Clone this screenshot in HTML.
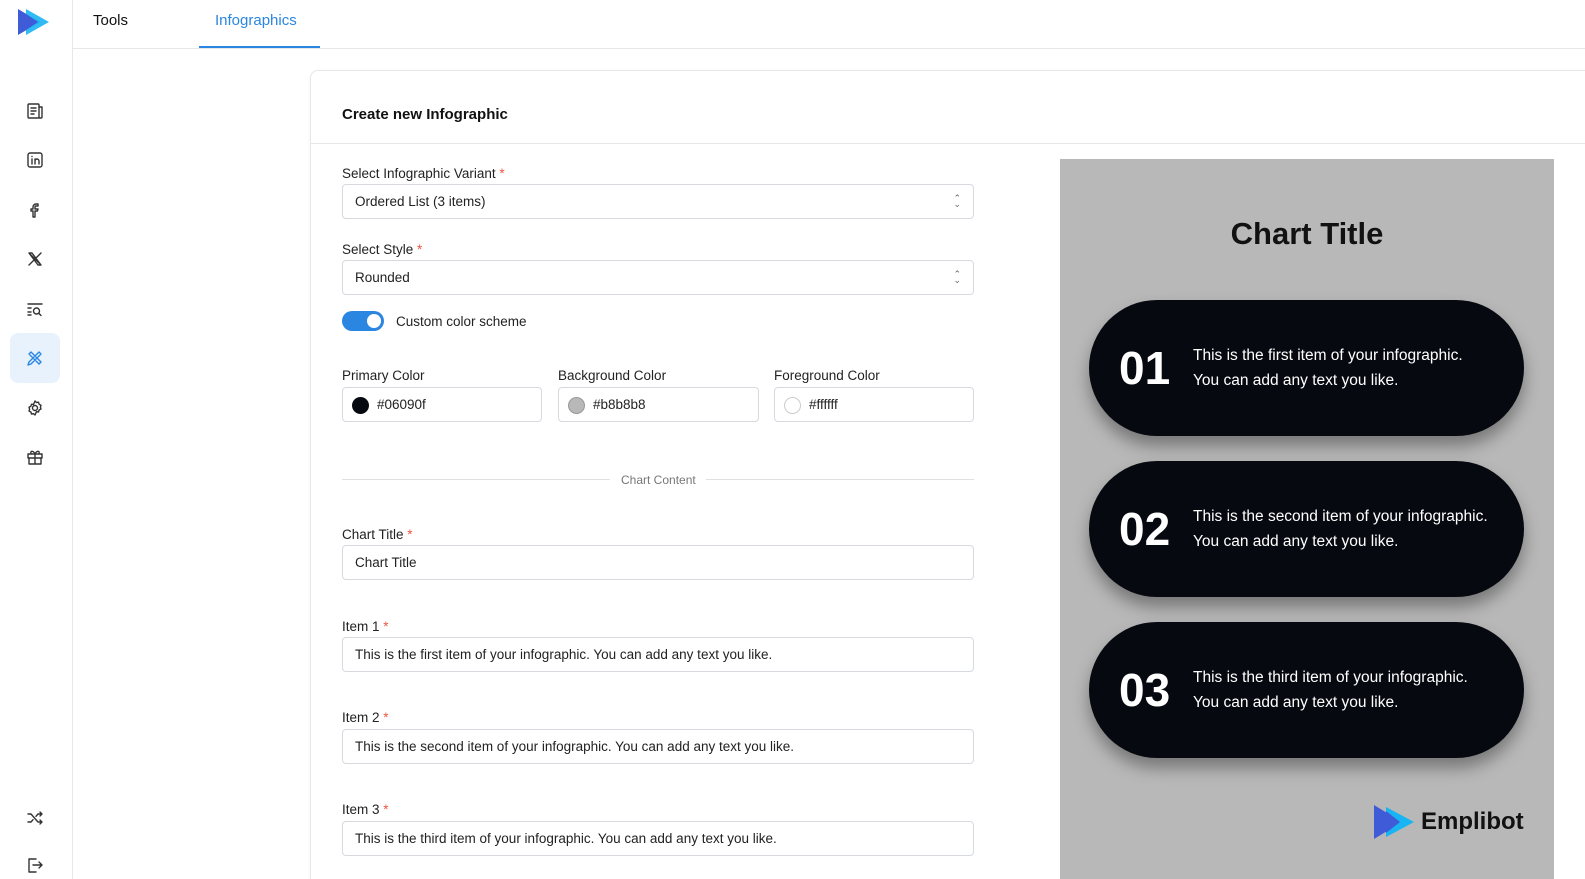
<!DOCTYPE html>
<html><head><style>
*{box-sizing:border-box;margin:0;padding:0}
html,body{width:1585px;height:879px;overflow:hidden}
body{background:#fff;font-family:"Liberation Sans",sans-serif;color:#111;position:relative}
.side{position:absolute;left:0;top:0;width:73px;height:879px;border-right:1px solid #e5e7eb}
.ic{position:absolute;left:10px;width:50px;height:50px;display:flex;align-items:center;justify-content:center;border-radius:8px}
.ic svg{width:18px;height:18px;fill:none;stroke:#333;stroke-width:1.4;stroke-linecap:round;stroke-linejoin:round}
.top{position:absolute;left:73px;top:0;right:0;height:49px;border-bottom:1px solid #e5e7eb}
.tab{position:absolute;top:12px;font-size:15px}
.card{position:absolute;left:310px;top:70px;width:1300px;height:820px;border:1px solid #e5e7eb;border-radius:8px;box-shadow:0 1px 3px rgba(0,0,0,.06)}
.lbl{position:absolute;left:342px;font-size:13.5px;color:#222}
.lbl i{color:#e54;font-style:normal}
.inp{position:absolute;left:342px;width:632px;height:35px;border:1px solid #d6d9de;border-radius:4px;font-size:13.5px;padding:0 12px;display:flex;align-items:center;color:#222}
.chev{position:absolute;right:12px;top:10px;font-size:9px;line-height:6px;color:#666}
.pill{position:absolute;left:1089px;width:435px;height:136px;background:#06090f;border-radius:68px;box-shadow:0 10px 16px rgba(0,0,0,.35);color:#fff}
.pill b{position:absolute;left:30px;top:41px;font-size:46px;font-weight:bold}
.pill span{position:absolute;left:104px;top:43px;font-size:15.5px;line-height:25px}
</style></head><body>
<div class="side">
<svg style="position:absolute;left:18px;top:9px" width="31" height="26" viewBox="0 0 31 26"><polygon points="0,0 0,26 22,13" fill="#3f5bd8"/><polygon points="8,0 8,26 31,13" fill="#19b4f2" opacity=".9"/><polygon points="8,5 8,21 20,13" fill="#3f5bd8"/></svg>
<div class="ic" style="top:86px"><svg viewBox="0 0 18 18"><rect x="2" y="2" width="11" height="14" rx="1"/><path d="M13 5h3v10a1 1 0 0 1-1 1h-2M5 6h5M5 9h5M5 12h3"/></svg></div>
<div class="ic" style="top:135px"><svg viewBox="0 0 18 18"><rect x="2" y="2" width="14" height="14" rx="2"/><path d="M6 8v5M6 5.5v.1M9 13V8M9 10a2 2 0 0 1 4 0v3"/></svg></div>
<div class="ic" style="top:185px"><svg viewBox="0 0 18 18"><path d="M7 16v-6H5V8h2V6a3 3 0 0 1 3-3h2v2h-2a1 1 0 0 0-1 1v2h3l-.5 2H9v6z"/></svg></div>
<div class="ic" style="top:234px"><svg viewBox="0 0 18 18"><path d="M3 3l12 12M15 3L3 15M3 3h3l9 12h-3z"/></svg></div>
<div class="ic" style="top:284px"><svg viewBox="0 0 18 18"><path d="M2 4h14M2 8h3M2 12h3M2 15h3"/><circle cx="10.5" cy="11" r="3"/><path d="M13 13.5l2 2"/></svg></div>
<div class="ic" style="top:333px;background:#e8f2fd"><svg viewBox="0 0 18 18" style="stroke:#2a86e0"><path d="M3 13l10-10 2 2-10 10-3 1zM3 5l2-2 10 10-2 2zM6 4l1 1M12 10l1 1"/></svg></div>
<div class="ic" style="top:383px"><svg viewBox="0 0 18 18"><circle cx="9" cy="9" r="2.5"/><path d="M9 2l1.5 1.5 2-.3.6 2 1.9 1-.6 2 .6 1.8-1.9 1-.6 2-2-.3L9 16l-1.5-1.3-2 .3-.6-2-1.9-1 .6-1.8-.6-2 1.9-1 .6-2 2 .3z"/></svg></div>
<div class="ic" style="top:432px"><svg viewBox="0 0 18 18"><rect x="2" y="6" width="14" height="4"/><path d="M3 10v6h12v-6M9 6v10M9 6C7 2 4 3 5 5.5M9 6c2-4 5-3 4-.5"/></svg></div>
<div class="ic" style="top:793px"><svg viewBox="0 0 18 18"><path d="M2 5h3l7 8h4M2 13h3l2-2.3M10 7.3L12 5h4M14 3l2 2-2 2M14 11l2 2-2 2"/></svg></div>
<div class="ic" style="top:840px"><svg viewBox="0 0 18 18"><path d="M10 3H3v13h7M7 9h9M13 6l3 3-3 3"/></svg></div>
</div>
<div class="top">
<div class="tab" style="left:20px;color:#111">Tools</div>
<div class="tab" style="left:142px;color:#2a86e0">Infographics</div>
<div style="position:absolute;left:126px;top:46px;width:121px;height:2px;background:#2a86e0"></div>
</div>
<div class="card"></div>
<div style="position:absolute;left:342px;top:106px;font-size:15px;font-weight:bold">Create new Infographic</div>
<div style="position:absolute;left:311px;top:143px;width:1274px;height:1px;background:#e5e7eb"></div>

<div class="lbl" style="top:166px">Select Infographic Variant <i>*</i></div>
<div class="inp" style="top:184px">Ordered List (3 items)<div class="chev">⌃<br>⌄</div></div>
<div class="lbl" style="top:242px">Select Style <i>*</i></div>
<div class="inp" style="top:260px">Rounded<div class="chev">⌃<br>⌄</div></div>
<div style="position:absolute;left:342px;top:311px;width:42px;height:20px;border-radius:10px;background:#2a86e0"><div style="position:absolute;right:3px;top:3px;width:14px;height:14px;border-radius:50%;background:#fff"></div></div>
<div class="lbl" style="left:396px;top:314px">Custom color scheme</div>

<div class="lbl" style="top:368px">Primary Color</div>
<div class="lbl" style="left:558px;top:368px">Background Color</div>
<div class="lbl" style="left:774px;top:368px">Foreground Color</div>
<div class="inp" style="top:387px;width:200px;padding-left:34px">#06090f<div style="position:absolute;left:9px;top:9px;width:17px;height:17px;border-radius:50%;background:#06090f"></div></div>
<div class="inp" style="left:558px;top:387px;width:201px;padding-left:34px">#b8b8b8<div style="position:absolute;left:9px;top:9px;width:17px;height:17px;border-radius:50%;background:#b8b8b8;border:1px solid #999"></div></div>
<div class="inp" style="left:774px;top:387px;width:200px;padding-left:34px">#ffffff<div style="position:absolute;left:9px;top:9px;width:17px;height:17px;border-radius:50%;background:#fff;border:1px solid #ccc"></div></div>

<div style="position:absolute;left:342px;top:479px;width:268px;height:1px;background:#e0e0e0"></div>
<div style="position:absolute;left:706px;top:479px;width:268px;height:1px;background:#e0e0e0"></div>
<div style="position:absolute;left:621px;top:473px;font-size:12px;color:#777">Chart Content</div>

<div class="lbl" style="top:527px">Chart Title <i>*</i></div>
<div class="inp" style="top:545px">Chart Title</div>
<div class="lbl" style="top:619px">Item 1 <i>*</i></div>
<div class="inp" style="top:637px">This is the first item of your infographic. You can add any text you like.</div>
<div class="lbl" style="top:710px">Item 2 <i>*</i></div>
<div class="inp" style="top:729px">This is the second item of your infographic. You can add any text you like.</div>
<div class="lbl" style="top:802px">Item 3 <i>*</i></div>
<div class="inp" style="top:821px">This is the third item of your infographic. You can add any text you like.</div>

<div style="position:absolute;left:1060px;top:159px;width:494px;height:720px;background:#b8b8b8"></div>
<div style="position:absolute;left:1060px;top:216px;width:494px;text-align:center;font-size:31px;font-weight:bold;color:#111">Chart Title</div>
<div class="pill" style="top:300px"><b>01</b><span>This is the first item of your infographic.<br>You can add any text you like.</span></div>
<div class="pill" style="top:461px"><b>02</b><span>This is the second item of your infographic.<br>You can add any text you like.</span></div>
<div class="pill" style="top:622px"><b>03</b><span>This is the third item of your infographic.<br>You can add any text you like.</span></div>
<svg style="position:absolute;left:1374px;top:805px" width="42" height="34" viewBox="0 0 42 34"><polygon points="0,0 0,34 28,17" fill="#3f5bd8"/><polygon points="12,2 12,32 40,17" fill="#19b4f2"/><polygon points="12,6 12,28 26,17" fill="#3f5bd8"/></svg>
<div style="position:absolute;left:1421px;top:808px;font-size:24px;font-weight:bold;color:#111">Emplibot</div>
</body></html>
